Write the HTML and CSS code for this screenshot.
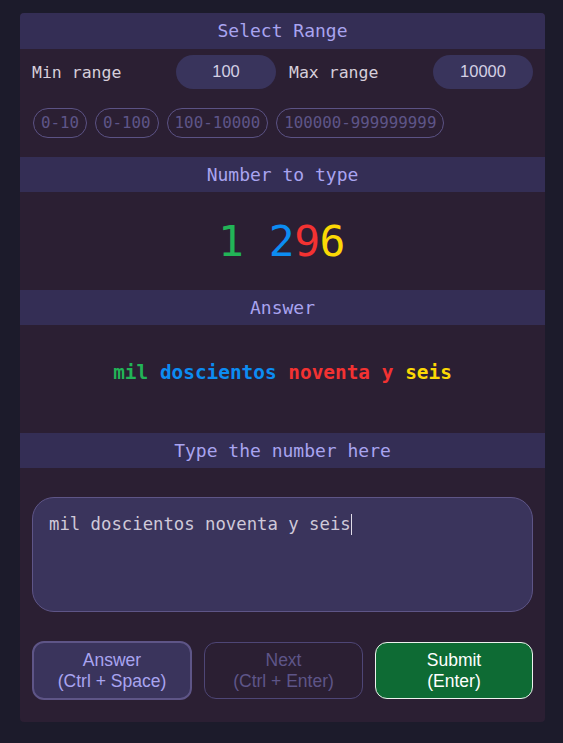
FILE: index.html
```html
<!DOCTYPE html>
<html lang="en">
<head>
<meta charset="utf-8">
<title>Number typing</title>
<link rel="stylesheet" href="styles.css">
</head>
<body>
<main class="card">
  <h2 class="band">Select Range</h2>
  <div class="range-row">
    <label class="label">Min range</label>
    <div class="num-input">100</div>
    <label class="label">Max range</label>
    <div class="num-input">10000</div>
  </div>
  <div class="chips">
    <span class="chip">0-10</span>
    <span class="chip">0-100</span>
    <span class="chip">100-10000</span>
    <span class="chip">100000-999999999</span>
  </div>

  <h2 class="band">Number to type</h2>
  <div class="number">
    <span class="c-green">1</span> <span class="c-blue">2</span><span class="c-red">9</span><span class="c-yellow">6</span>
  </div>

  <h2 class="band">Answer</h2>
  <div class="answer">
    <span class="c-green">mil</span> <span class="c-blue">doscientos</span> <span class="c-red">noventa</span> <span class="c-red">y</span> <span class="c-yellow">seis</span>
  </div>

  <h2 class="band">Type the number here</h2>
  <div class="typing">
    <div class="textarea">mil doscientos noventa y seis<span class="caret"></span></div>
  </div>

  <div class="buttons">
    <button class="btn btn-answer">Answer<br>(Ctrl + Space)</button>
    <button class="btn btn-next">Next<br>(Ctrl + Enter)</button>
    <button class="btn btn-submit">Submit<br>(Enter)</button>
  </div>
</main>
</body>
</html>
```

FILE: styles.css
```css
* { box-sizing: border-box; }

html, body {
  margin: 0;
  padding: 0;
  background: #1c1b2b;
}

body {
  padding: 13px 18px 20px 20px;
  font-family: "DejaVu Sans Mono", "Liberation Mono", monospace;
}

.card {
  width: 525px;
  background: #2b1f33;
  border-radius: 4px;
  overflow: hidden;
  padding-bottom: 22px;
}

.band {
  margin: 0;
  height: 35px;
  background: #342e55;
  color: #a9a4f0;
  font-size: 18px;
  font-weight: normal;
  line-height: 35px;
  text-align: center;
}

.card > .band:first-child {
  height: 36px;
  line-height: 36px;
}

.range-row {
  display: flex;
  align-items: center;
  padding: 6px 12px 0 12px;
  height: 40px;
}

.label {
  color: #d6ceda;
  font-size: 16.5px;
  width: 144px;
}

.range-row .label:nth-of-type(2) {
  width: 144px;
  margin-left: 13px;
}

.num-input {
  width: 100px;
  height: 34px;
  border-radius: 17px;
  background: #39345c;
  color: #d4d0e4;
  font-family: "Liberation Sans", Arial, sans-serif;
  font-size: 16.5px;
  line-height: 32px;
  text-align: center;
}

.chips {
  display: flex;
  gap: 8px;
  padding: 19px 13px 19px 13px;
}

.chip {
  height: 30px;
  padding: 0 7px;
  border: 1px solid #5b5284;
  border-radius: 15px;
  color: #5e5588;
  font-size: 15.8px;
  line-height: 28px;
  white-space: nowrap;
}

.number {
  height: 98px;
  font-size: 43px;
  line-height: 98px;
  text-align: center;
  padding-right: 2px;
  letter-spacing: -0.5px;
}

.answer {
  height: 108px;
  padding-top: 36px;
  font-size: 19.4px;
  font-weight: bold;
  line-height: 24px;
  text-align: center;
}

.c-green { color: #22b457; }
.c-blue { color: #0c8cf2; }
.c-red { color: #f33232; }
.c-yellow { color: #fbd805; }

.typing {
  padding: 29px 12px 0 12px;
}

.textarea {
  height: 115px;
  border: 1px solid #5e5587;
  border-radius: 22px;
  background: #3a345c;
  color: #cfc9d9;
  font-size: 17.3px;
  line-height: 22px;
  padding: 15px 16px;
}

.caret {
  display: inline-block;
  width: 1px;
  height: 21px;
  background: #e0dce8;
  vertical-align: -5px;
}

.buttons {
  display: grid;
  grid-template-columns: 160px 159px 158px;
  column-gap: 12px;
  padding: 29px 12px 0 12px;
}

.btn {
  height: 58px;
  border-radius: 12px;
  font-family: "Liberation Sans", Arial, sans-serif;
  font-size: 17.5px;
  line-height: 21px;
  padding: 0;
  margin: 0;
}

.btn-answer {
  background: #3a345c;
  border: 2px solid #5e5587;
  color: #a9a4f0;
  height: 59px;
}

.btn-next {
  background: transparent;
  border: 1px solid #4e4676;
  color: #5e5588;
  margin-top: 1px;
  height: 57px;
}

.btn-submit {
  background: #0e6b34;
  border: 1px solid #eef2ee;
  color: #ffffff;
  margin-top: 1px;
  height: 57px;
}
```
